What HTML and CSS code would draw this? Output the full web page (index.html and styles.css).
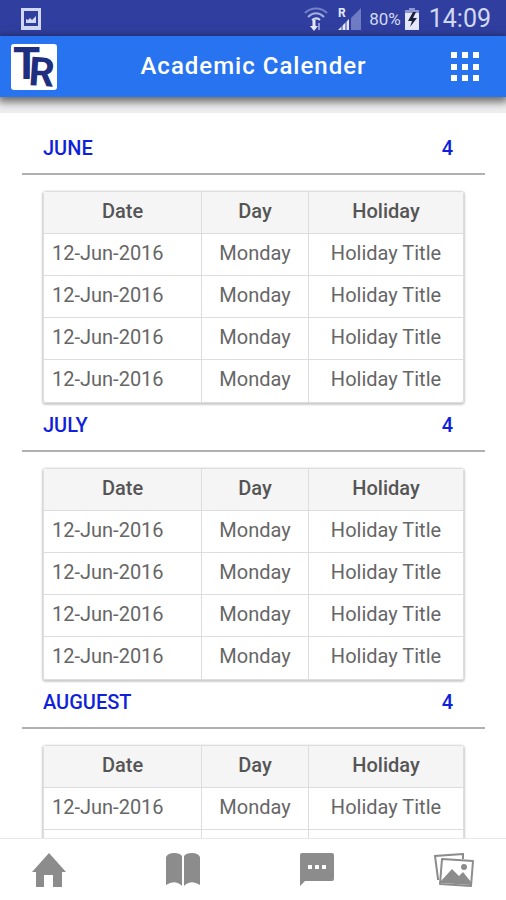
FILE: index.html
```
<!DOCTYPE html>
<html lang="en">

<head>
    <meta charset="UTF-8">
    <meta name="viewport" content="width=device-width, initial-scale=1.0">
    <title>Academic Calender</title>
    <link rel="stylesheet" href="styles.css">
</head>

<body>
    <!-- Phone status bar -->
    <div class="status-bar">
        <svg class="status-picture" width="20" height="22" viewBox="0 0 20 22">
            <path fill="#d3d8f2" fill-rule="evenodd" d="M0 0h20v22H0zM3 3v15h14V3z" />
            <path fill="#d3d8f2" d="M5 15v-4l2 1 2-2 2 2 4-4v7z" />
        </svg>
        <div class="status-icons">
            <svg width="24" height="24" viewBox="0 0 24 24" fill="none">
                <path stroke="#7682c8" stroke-width="2" d="M1 6C7 0 17 0 23 6" />
                <path stroke="#a5aee0" stroke-width="2" d="M4 10c5-5 11-5 16 0" />
                <path stroke="#d3d8f2" stroke-width="2" d="M8 13c3-2 6-2 8 0" />
                <path stroke="#e4e8fa" stroke-width="3" d="M10 13v9" />
                <path fill="#e4e8fa" d="M6 19h8l-4 5z" />
                <path stroke="#8d97d3" stroke-width="2" d="M15 23v-7" />
            </svg>
            <svg class="status-signal" width="24" height="24" viewBox="0 0 24 24">
                <path fill="#6f7cc4" d="M23 1v22H13V11z" />
                <path fill="#e4e8fa" d="M11 12v11H0z" />
                <path stroke="#303f9f" d="M4 18v5M8 14v9" />
                <text class="roaming" x="0" y="10">R</text>
            </svg>
            <span class="battery-level">80%</span>
            <svg width="14" height="22" viewBox="0 0 14 22">
                <path fill="#8d97d3" d="M4 0h6v2h4v7H0V2h4z" />
                <path fill="#e4e8fa" d="M0 5h14v17H0z" />
                <path fill="#1b1f3d" d="M8 4L3 13h4l-2 6 7-9H8l3-6z" />
            </svg>
            <span class="clock">14:09</span>
        </div>
    </div>

    <!-- App header with logo, title and menu -->
    <header class="app-header">
        <svg class="logo" width="46" height="46" viewBox="0 0 46 46" role="img" aria-label="TR">
            <rect width="46" height="46" rx="3" fill="#fff" />
            <text class="logo-t" x="2" y="35">T</text>
            <text class="logo-r" x="17" y="41" transform="rotate(4 17 41)">R</text>
        </svg>
        <h1>Academic Calender</h1>
        <button class="menu-button" type="button" aria-label="Menu">
            <svg width="30" height="30" viewBox="0 0 30 30" fill="#fff">
                <path d="M1 0h6v6H1zM12 0h6v6h-6zM23 0h6v6h-6zM1 12h6v6H1zM12 12h6v6h-6zM23 12h6v6h-6zM1 23h6v6H1zM12 23h6v6h-6zM23 23h6v6h-6z" />
            </svg>
        </button>
    </header>

    <!-- Holidays by month -->
    <main class="calendar">
        <section class="month">
            <h2><span>JUNE</span><span>4</span></h2>
            <table>
                <thead>
                    <tr><th class="date">Date</th><th class="day">Day</th><th>Holiday</th></tr>
                </thead>
                <tbody>
                    <tr><td>12-Jun-2016</td><td>Monday</td><td>Holiday Title</td></tr>
                    <tr><td>12-Jun-2016</td><td>Monday</td><td>Holiday Title</td></tr>
                    <tr><td>12-Jun-2016</td><td>Monday</td><td>Holiday Title</td></tr>
                    <tr><td>12-Jun-2016</td><td>Monday</td><td>Holiday Title</td></tr>
                </tbody>
            </table>
        </section>

        <section class="month">
            <h2><span>JULY</span><span>4</span></h2>
            <table>
                <thead>
                    <tr><th class="date">Date</th><th class="day">Day</th><th>Holiday</th></tr>
                </thead>
                <tbody>
                    <tr><td>12-Jun-2016</td><td>Monday</td><td>Holiday Title</td></tr>
                    <tr><td>12-Jun-2016</td><td>Monday</td><td>Holiday Title</td></tr>
                    <tr><td>12-Jun-2016</td><td>Monday</td><td>Holiday Title</td></tr>
                    <tr><td>12-Jun-2016</td><td>Monday</td><td>Holiday Title</td></tr>
                </tbody>
            </table>
        </section>

        <section class="month">
            <h2><span>AUGUEST</span><span>4</span></h2>
            <table>
                <thead>
                    <tr><th class="date">Date</th><th class="day">Day</th><th>Holiday</th></tr>
                </thead>
                <tbody>
                    <tr><td>12-Jun-2016</td><td>Monday</td><td>Holiday Title</td></tr>
                    <tr><td></td><td></td><td></td></tr>
                </tbody>
            </table>
        </section>
    </main>

    <!-- Bottom tabs -->
    <nav class="tabs">
        <a href="#home" aria-label="Home">
            <svg width="34" height="34" viewBox="0 0 34 34">
                <path d="M17 0L0 19h4v15h8V22h9v12h9V19h4z" />
            </svg>
        </a>
        <a href="#book" aria-label="Book">
            <svg width="34" height="34" viewBox="0 0 34 34">
                <path d="M0 4Q2 0 8 0t8 3v30q-7-7-16-1zM18 3q2-3 8-3t8 4v28q-9-6-16 1z" />
            </svg>
        </a>
        <a href="#messages" aria-label="Messages">
            <svg width="34" height="34" viewBox="0 0 34 34">
                <path fill-rule="evenodd" d="M2 0h30q2 0 2 2v24q0 2-2 2H5l-5 5V2q0-2 2-2zM8 12v4h4v-4zM15 12v4h4v-4zM22 12v4h4v-4z" />
            </svg>
        </a>
        <a href="#gallery" aria-label="Gallery">
            <svg width="40" height="34" viewBox="0 0 40 34">
                <path fill="none" stroke="#8c8c8c" stroke-width="2" d="M5 26H4L1 3l28-2v5" />
                <path fill="#fff" stroke="#8c8c8c" stroke-width="2" stroke-linejoin="round" d="M8 6l31 2-2 25-31-2z" />
                <path d="M7 28L18 16l7 7 4-4 8 10v3L7 30z" />
                <circle cx="30" cy="14" r="3" />
            </svg>
        </a>
    </nav>
</body>

</html>
```
FILE: styles.css
```
* {
    box-sizing: border-box;
}

body {
    display: flex;
    flex-direction: column;
    height: 100vh;
    margin: 0;
    background-color: #fff;
    color: #666;
    font-family: Roboto, sans-serif;
    overflow: hidden;
}

/* Status bar */
.status-bar {
    display: flex;
    align-items: center;
    justify-content: space-between;
    flex: none;
    height: 36px;
    padding: 2px 15px 0 21px;
    background-color: #303f9f;
    color: #d3d8f2;
}

.status-icons {
    display: flex;
    align-items: center;
}

.status-signal {
    margin-left: 10px;
}

.roaming {
    fill: #e4e8fa;
    font-size: 12px;
    font-weight: bold;
}

.battery-level {
    margin: 0 4px 0 7px;
    font-size: 17px;
}

.clock {
    margin-left: 10px;
    font-size: 25px;
    line-height: 32px;
}

/* App header */
.app-header {
    display: flex;
    align-items: center;
    justify-content: space-between;
    flex: none;
    height: 61px;
    padding: 0 26px 0 11px;
    background-color: #2874f0;
    color: #fff;
    box-shadow: 0 3px 8px 2px rgba(0, 0, 0, 0.55);
    z-index: 1;
}

.app-header h1 {
    margin: 0;
    padding-bottom: 2px;
    font-size: 24px;
    font-weight: 500;
    letter-spacing: 1px;
}

/* Logo letters, the R lies over the T */
.logo-t,
.logo-r {
    fill: #1f2f80;
    font-weight: bold;
}

.logo-t {
    font-size: 44px;
}

.logo-r {
    font-size: 40px;
    stroke: #fff;
    stroke-width: 2px;
    paint-order: stroke;
}

.menu-button {
    display: flex;
    padding: 0;
    border: none;
    background: none;
    cursor: pointer;
}

/* Month list */
.calendar {
    flex: 1;
    min-height: 0;
    padding: 13px 21px 0 22px;
    border-top: 16px solid #eee;
    overflow: hidden;
}

.month h2 {
    display: flex;
    justify-content: space-between;
    margin: 0 0 16px;
    padding: 10px 32px 13px 21px;
    border-bottom: 2px solid #b0b0b0;
    color: #0f1fdc;
    font-size: 20px;
    font-weight: 500;
    line-height: 24px;
}

.month table {
    width: calc(100% - 42px);
    margin: 0 21px;
    table-layout: fixed;
    border: 1px solid #ddd;
    border-spacing: 0;
    border-radius: 3px;
    box-shadow: 0 1px 2px 1px rgba(0, 0, 0, 0.2);
    font-size: 20px;
    line-height: 24px;
}

.month th,
.month td {
    height: 42px;
    padding: 0 8px 4px;
    border-right: 1px solid #ddd;
    border-bottom: 1px solid #ddd;
    text-align: center;
}

.month th {
    background-color: #f5f5f5;
    color: #555;
    font-weight: 500;
}

.month td:first-child {
    text-align: left;
}

.month th:last-child,
.month td:last-child {
    border-right: none;
}

.month tbody tr:last-child td {
    border-bottom: none;
}

.date {
    width: 158px;
}

.day {
    width: 107px;
}

/* Bottom tabs */
.tabs {
    display: flex;
    align-items: center;
    justify-content: space-between;
    flex: none;
    height: 62px;
    padding: 0 32px;
    border-top: 1px solid #e8e8e8;
    background-color: #fff;
}

.tabs a {
    display: flex;
}

.tabs svg {
    fill: #8c8c8c;
}
```
